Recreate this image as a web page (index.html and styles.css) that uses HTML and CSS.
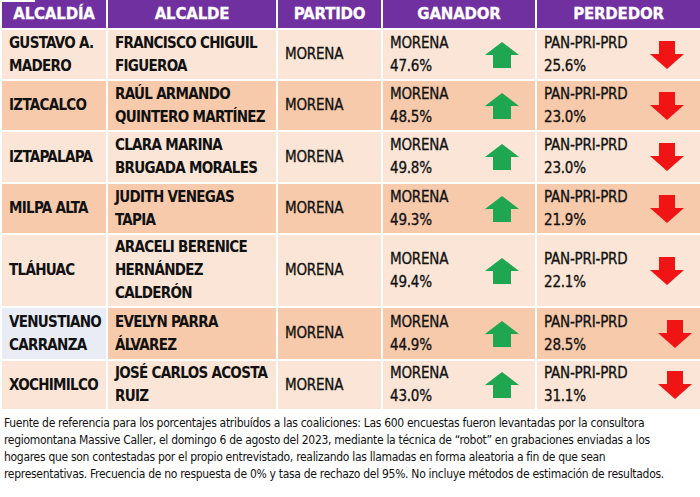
FILE: index.html
```html
<!DOCTYPE html>
<html lang="es">
<head>
<meta charset="utf-8">
<link rel="stylesheet" href="styles.css">
</head>
<body>
<div class="tab-mark"></div>
<table class="results">
  <colgroup>
    <col class="c1"><col class="c2"><col class="c3"><col class="c4"><col class="c5">
  </colgroup>
  <thead>
    <tr><th>ALCALDÍA</th><th>ALCALDE</th><th>PARTIDO</th><th>GANADOR</th><th>PERDEDOR</th></tr>
  </thead>
  <tbody>
    <tr class="light r1">
      <td class="b">GUSTAVO A.<br>MADERO</td>
      <td class="b">FRANCISCO CHIGUIL<br>FIGUEROA</td>
      <td>MORENA</td>
      <td><div class="res"><span>MORENA<br>47.6%</span><svg class="up" viewBox="0 0 34 26"><path d="M17 0 L34 13 L26 13 L26 26 L8 26 L8 13 L0 13 Z"/></svg></div></td>
      <td><div class="res"><span>PAN-PRI-PRD<br>25.6%</span><svg class="down" viewBox="0 0 34 28"><path d="M9 0 L25 0 L25 13 L34 13 L17 28 L0 13 L9 13 Z"/></svg></div></td>
    </tr>
    <tr class="dark r2">
      <td class="b">IZTACALCO</td>
      <td class="b">RAÚL ARMANDO<br>QUINTERO MARTÍNEZ</td>
      <td>MORENA</td>
      <td><div class="res"><span>MORENA<br>48.5%</span><svg class="up" viewBox="0 0 34 26"><path d="M17 0 L34 13 L26 13 L26 26 L8 26 L8 13 L0 13 Z"/></svg></div></td>
      <td><div class="res"><span>PAN-PRI-PRD<br>23.0%</span><svg class="down" viewBox="0 0 34 28"><path d="M9 0 L25 0 L25 13 L34 13 L17 28 L0 13 L9 13 Z"/></svg></div></td>
    </tr>
    <tr class="light r3">
      <td class="b">IZTAPALAPA</td>
      <td class="b">CLARA MARINA<br>BRUGADA MORALES</td>
      <td>MORENA</td>
      <td><div class="res"><span>MORENA<br>49.8%</span><svg class="up" viewBox="0 0 34 26"><path d="M17 0 L34 13 L26 13 L26 26 L8 26 L8 13 L0 13 Z"/></svg></div></td>
      <td><div class="res"><span>PAN-PRI-PRD<br>23.0%</span><svg class="down" viewBox="0 0 34 28"><path d="M9 0 L25 0 L25 13 L34 13 L17 28 L0 13 L9 13 Z"/></svg></div></td>
    </tr>
    <tr class="dark r4">
      <td class="b">MILPA ALTA</td>
      <td class="b">JUDITH VENEGAS<br>TAPIA</td>
      <td>MORENA</td>
      <td><div class="res"><span>MORENA<br>49.3%</span><svg class="up" viewBox="0 0 34 26"><path d="M17 0 L34 13 L26 13 L26 26 L8 26 L8 13 L0 13 Z"/></svg></div></td>
      <td><div class="res"><span>PAN-PRI-PRD<br>21.9%</span><svg class="down" viewBox="0 0 34 28"><path d="M9 0 L25 0 L25 13 L34 13 L17 28 L0 13 L9 13 Z"/></svg></div></td>
    </tr>
    <tr class="light r5">
      <td class="b">TLÁHUAC</td>
      <td class="b">ARACELI BERENICE<br>HERNÁNDEZ<br>CALDERÓN</td>
      <td>MORENA</td>
      <td><div class="res"><span>MORENA<br>49.4%</span><svg class="up" viewBox="0 0 34 26"><path d="M17 0 L34 13 L26 13 L26 26 L8 26 L8 13 L0 13 Z"/></svg></div></td>
      <td><div class="res"><span>PAN-PRI-PRD<br>22.1%</span><svg class="down" viewBox="0 0 34 28"><path d="M9 0 L25 0 L25 13 L34 13 L17 28 L0 13 L9 13 Z"/></svg></div></td>
    </tr>
    <tr class="dark r6">
      <td class="b blue">VENUSTIANO<br>CARRANZA</td>
      <td class="b">EVELYN PARRA<br>ÁLVAREZ</td>
      <td>MORENA</td>
      <td><div class="res"><span>MORENA<br>44.9%</span><svg class="up" viewBox="0 0 34 26"><path d="M17 0 L34 13 L26 13 L26 26 L8 26 L8 13 L0 13 Z"/></svg></div></td>
      <td><div class="res shift"><span>PAN-PRI-PRD<br>28.5%</span><svg class="down" viewBox="0 0 34 28"><path d="M9 0 L25 0 L25 13 L34 13 L17 28 L0 13 L9 13 Z"/></svg></div></td>
    </tr>
    <tr class="light r7">
      <td class="b">XOCHIMILCO</td>
      <td class="b">JOSÉ CARLOS ACOSTA<br>RUIZ</td>
      <td>MORENA</td>
      <td><div class="res"><span>MORENA<br>43.0%</span><svg class="up" viewBox="0 0 34 26"><path d="M17 0 L34 13 L26 13 L26 26 L8 26 L8 13 L0 13 Z"/></svg></div></td>
      <td><div class="res shift"><span>PAN-PRI-PRD<br>31.1%</span><svg class="down" viewBox="0 0 34 28"><path d="M9 0 L25 0 L25 13 L34 13 L17 28 L0 13 L9 13 Z"/></svg></div></td>
    </tr>
  </tbody>
</table>
<p class="note">Fuente de referencia para los porcentajes atribuídos a las coaliciones: Las 600 encuestas fueron levantadas por la consultora<br>regiomontana Massive Caller, el domingo 6 de agosto del 2023, mediante la técnica de “robot” en grabaciones enviadas a los<br>hogares que son contestadas por el propio entrevistado, realizando las llamadas en forma aleatoria a fin de que sean<br>representativas. Frecuencia de no respuesta de 0% y tasa de rechazo del 95%. No incluye métodos de estimación de resultados.</p>
</body>
</html>
```
FILE: styles.css
```css
html, body {
  margin: 0;
  padding: 0;
  background: #ffffff;
}
body {
  width: 700px;
  height: 497px;
  overflow: hidden;
  position: relative;
  font-family: "DejaVu Sans", "Liberation Sans", sans-serif;
  font-stretch: condensed;
  color: #111111;
}
.tab-mark {
  position: absolute;
  left: 0;
  top: 0;
  width: 35px;
  height: 2px;
  background: #ffffff;
  z-index: 2;
}
.results {
  border-collapse: collapse;
  table-layout: fixed;
  width: 700px;
}
.c1 { width: 106px; }
.c2 { width: 170px; }
.c3 { width: 105px; }
.c4 { width: 154px; }
.c5 { width: 165px; }
.results th {
  background: #7030a0;
  color: #ffffff;
  font-family: "DejaVu Sans", sans-serif;
  font-stretch: normal;
  font-weight: 900;
  font-size: 15px;
  height: 28px;
  padding: 0;
  border: 2px solid #ffffff;
  border-top: none;
  text-align: center;
  letter-spacing: -0.2px;
  -webkit-text-stroke: 0.3px #ffffff;
}
.results td {
  border: 2px solid #ffffff;
  padding: 0 0 0 7px;
  font-size: 15px;
  line-height: 23px;
  vertical-align: middle;
  font-weight: 400;
  letter-spacing: -0.2px;
  -webkit-text-stroke: 0.3px #111111;
}
.results td.b {
  font-weight: 700;
  letter-spacing: -0.7px;
  -webkit-text-stroke: 0;
}
.light td { background: #fbe5d6; }
.dark td { background: #f7caac; }
.results td.blue { background: #e9ebf5; }
.r1 td { height: 49px; }
.r2 td { height: 49px; }
.r3 td { height: 50px; }
.r4 td { height: 49px; }
.r5 td { height: 71px; }
.r6 td { height: 51px; }
.r7 td { height: 48px; }
.res {
  display: flex;
  align-items: center;
  justify-content: space-between;
  padding-right: 16px;
}
.res.shift { padding-right: 8px; }
.up { width: 34px; height: 26px; fill: #1ea650; }
.down { width: 34px; height: 28px; fill: #f01414; }
.note {
  margin: 4px 0 0 0;
  padding: 0 0 0 4px;
  font-size: 12px;
  line-height: 17px;
  letter-spacing: -0.3px;
  white-space: nowrap;
  color: #111111;
}
```
